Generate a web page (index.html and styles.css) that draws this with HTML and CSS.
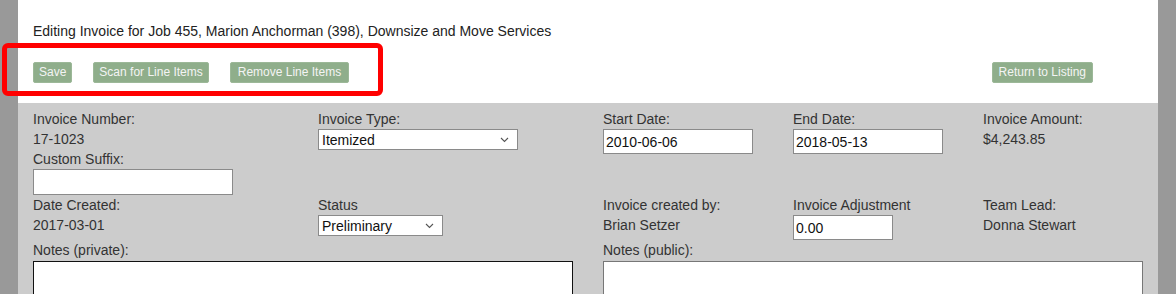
FILE: index.html
```html
<!DOCTYPE html>
<html>
<head>
<meta charset="utf-8">
<link rel="stylesheet" href="styles.css">
</head>
<body>
<div class="page">
  <div class="header">
    <div class="title">Editing Invoice for Job 455, Marion Anchorman (398), Downsize and Move Services</div>
    <div class="toolbar">
      <div class="btn-group">
        <button class="btn">Save</button>
        <button class="btn">Scan for Line Items</button>
        <button class="btn">Remove Line Items</button>
      </div>
      <button class="btn">Return to Listing</button>
    </div>
  </div>
  <div class="form">
    <div class="grid">
      <div class="cell">
        <div class="line">Invoice Number:</div>
        <div class="line">17-1023</div>
        <div class="line">Custom Suffix:</div>
        <input class="input suffix" type="text">
      </div>
      <div class="cell">
        <div class="line">Invoice Type:</div>
        <div class="select type"><span>Itemized</span><svg width="9" height="6" viewBox="0 0 9 6"><path d="M1 1 L4.5 4.5 L8 1" fill="none" stroke="#555" stroke-width="1.1"/></svg></div>
      </div>
      <div class="cell">
        <div class="line">Start Date:</div>
        <input class="input date" type="text" value="2010-06-06">
      </div>
      <div class="cell">
        <div class="line">End Date:</div>
        <input class="input date" type="text" value="2018-05-13">
      </div>
      <div class="cell">
        <div class="line">Invoice Amount:</div>
        <div class="line">$4,243.85</div>
      </div>

      <div class="cell">
        <div class="line">Date Created:</div>
        <div class="line">2017-03-01</div>
      </div>
      <div class="cell">
        <div class="line">Status</div>
        <div class="select status"><span>Preliminary</span><svg width="9" height="6" viewBox="0 0 9 6"><path d="M1 1 L4.5 4.5 L8 1" fill="none" stroke="#555" stroke-width="1.1"/></svg></div>
      </div>
      <div class="cell">
        <div class="line">Invoice created by:</div>
        <div class="line">Brian Setzer</div>
      </div>
      <div class="cell">
        <div class="line">Invoice Adjustment</div>
        <input class="input adj" type="text" value="0.00">
      </div>
      <div class="cell">
        <div class="line">Team Lead:</div>
        <div class="line">Donna Stewart</div>
      </div>
    </div>
    <div class="notes">
      <div class="note">
        <div class="line">Notes (private):</div>
        <textarea class="area private"></textarea>
      </div>
      <div class="note">
        <div class="line">Notes (public):</div>
        <textarea class="area public"></textarea>
      </div>
    </div>
  </div>
</div>
<div class="highlight"></div>
</body>
</html>
```

FILE: styles.css
```css
html, body {
  margin: 0;
  padding: 0;
}
body {
  background: #999999;
  font-family: "Liberation Sans", Arial, sans-serif;
  width: 1176px;
  height: 294px;
  overflow: hidden;
  position: relative;
}
.page {
  margin: 0 18px;
  width: 1140px;
  background: #ffffff;
  height: 294px;
  overflow: hidden;
}
.header {
  height: 103px;
  padding: 0 15px;
  box-sizing: border-box;
  padding-top: 23px;
}
.title {
  font-size: 14px;
  color: #222;
  line-height: 16px;
}
.toolbar {
  display: flex;
  justify-content: space-between;
  margin-top: 23px;
  padding-right: 50px;
}
.btn-group {
  display: flex;
  gap: 21px;
}
.btn {
  background: #8fae8b;
  color: #f4f4f4;
  border: 1px solid #9cb898;
  border-radius: 2px;
  font-family: "Liberation Sans", Arial, sans-serif;
  font-size: 12px;
  height: 21px;
  padding: 0 5px;
  line-height: 19px;
}
.btn-group .btn:last-child {
  padding: 0 7px;
}
.header .toolbar > .btn {
  padding: 0 6px;
}
.form {
  background: #cccccc;
  height: 191px;
  padding: 6px 15px 0;
  box-sizing: border-box;
  overflow: hidden;
}
.grid {
  display: grid;
  grid-template-columns: 285px 285px 190px 190px 1fr;
}
.line {
  font-size: 14px;
  line-height: 20px;
  color: #333;
}
.input {
  display: block;
  box-sizing: border-box;
  border: 1px solid #8a8a8a;
  background: #fff;
  font-family: "Liberation Sans", Arial, sans-serif;
  font-size: 14px;
  color: #111;
  padding: 0 2px;
  margin: 0;
}
.suffix {
  width: 200px;
  height: 26px;
}
.date {
  width: 150px;
  height: 25px;
}
.adj {
  width: 100px;
  height: 25px;
}
.select {
  box-sizing: border-box;
  height: 21px;
  border: 1px solid #8a8a8a;
  background: #fff;
  display: flex;
  align-items: center;
  justify-content: space-between;
  padding: 0 8px 0 3px;
  font-size: 14px;
  color: #111;
}
.type { width: 200px; }
.status { width: 125px; }
.notes {
  display: grid;
  grid-template-columns: 570px 1fr;
}
.area {
  display: block;
  box-sizing: border-box;
  width: 540px;
  height: 60px;
  margin: 1px 0 0;
  background: #fff;
  resize: none;
}
.private { border: 1px solid #111; }
.public { border: 1px solid #777; }
.highlight {
  position: absolute;
  left: 2px;
  top: 43px;
  width: 381px;
  height: 53px;
  box-sizing: border-box;
  border: 5px solid #ff0000;
  border-radius: 6px;
}
```
